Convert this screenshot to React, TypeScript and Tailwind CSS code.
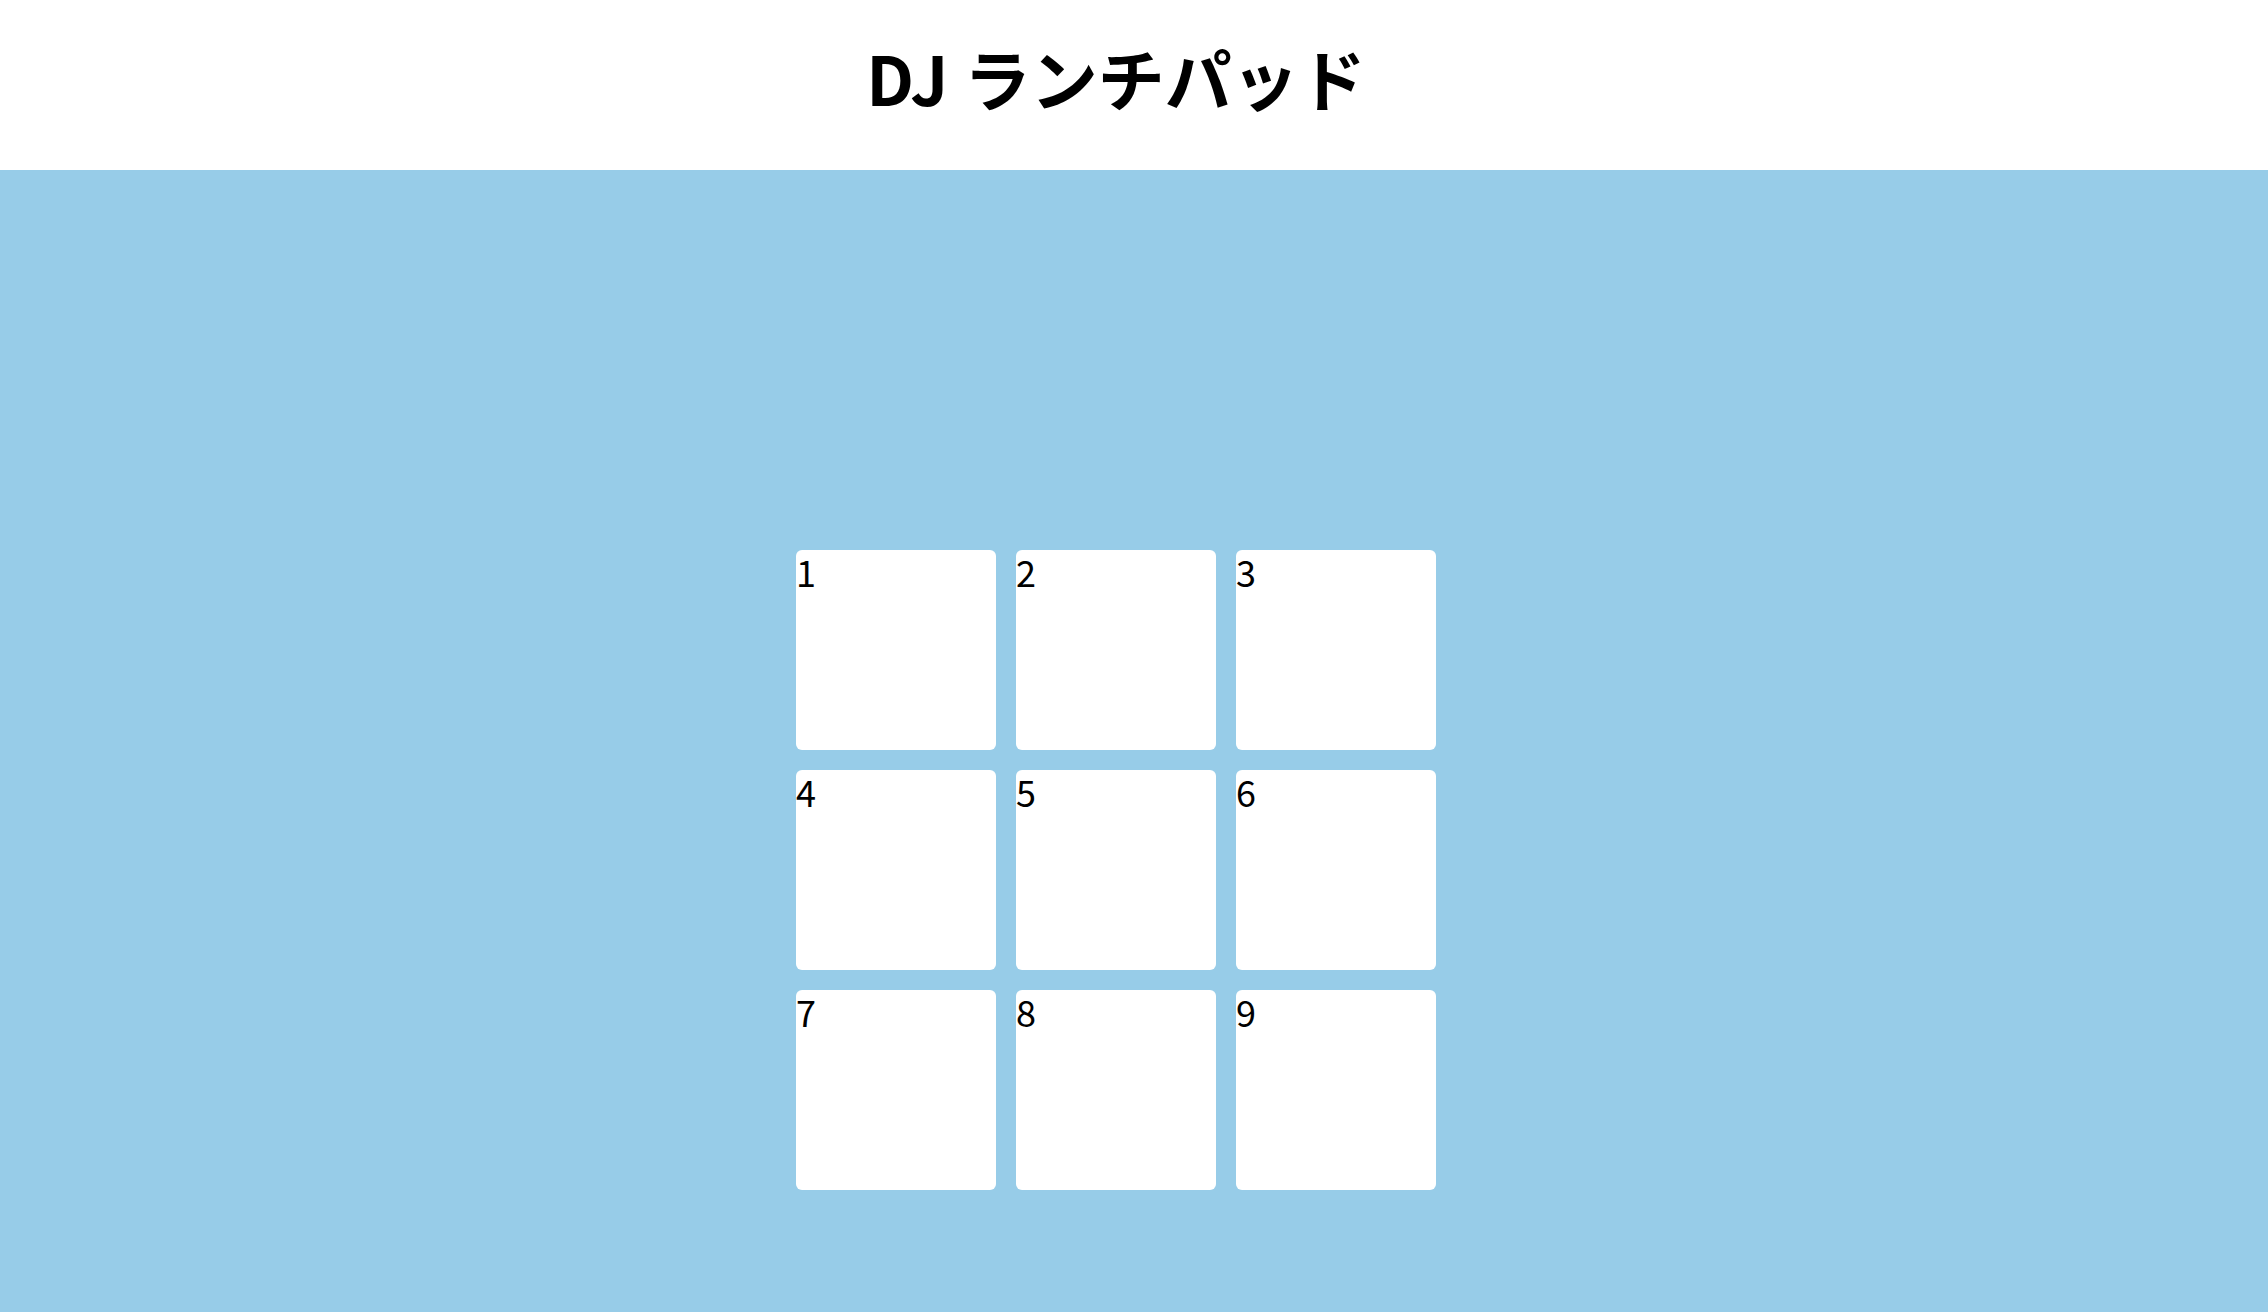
const pads = [1, 2, 3, 4, 5, 6, 7, 8, 9];

function Pad({ n }: { n: number }) {
  return (
    <button className="w-[200px] h-[200px] bg-white rounded-[6px] text-left align-top flex items-start">
      <span className="text-[36px] leading-[1.2] text-black font-normal">{n}</span>
    </button>
  );
}

export default function App() {
  return (
    <div
      className="min-h-screen flex flex-col bg-[#97cce8] pr-[36px]"
      style={{ fontFamily: '"Noto Sans CJK JP", "Noto Sans", sans-serif' }}
    >
      {/* ヘッダー */}
      <header className="h-[170px] bg-white flex items-center justify-center -mr-[36px] pr-[36px] pb-[18px]">
        <h1 className="text-[67px] font-bold text-black leading-none">DJ ランチパッド</h1>
      </header>
      {/* パッド */}
      <main className="flex-1 flex justify-center pt-[380px] pb-[122px]">
        <div className="grid grid-cols-3 gap-[20px]">
          {pads.map((n) => (
            <Pad key={n} n={n} />
          ))}
        </div>
      </main>
    </div>
  );
}
